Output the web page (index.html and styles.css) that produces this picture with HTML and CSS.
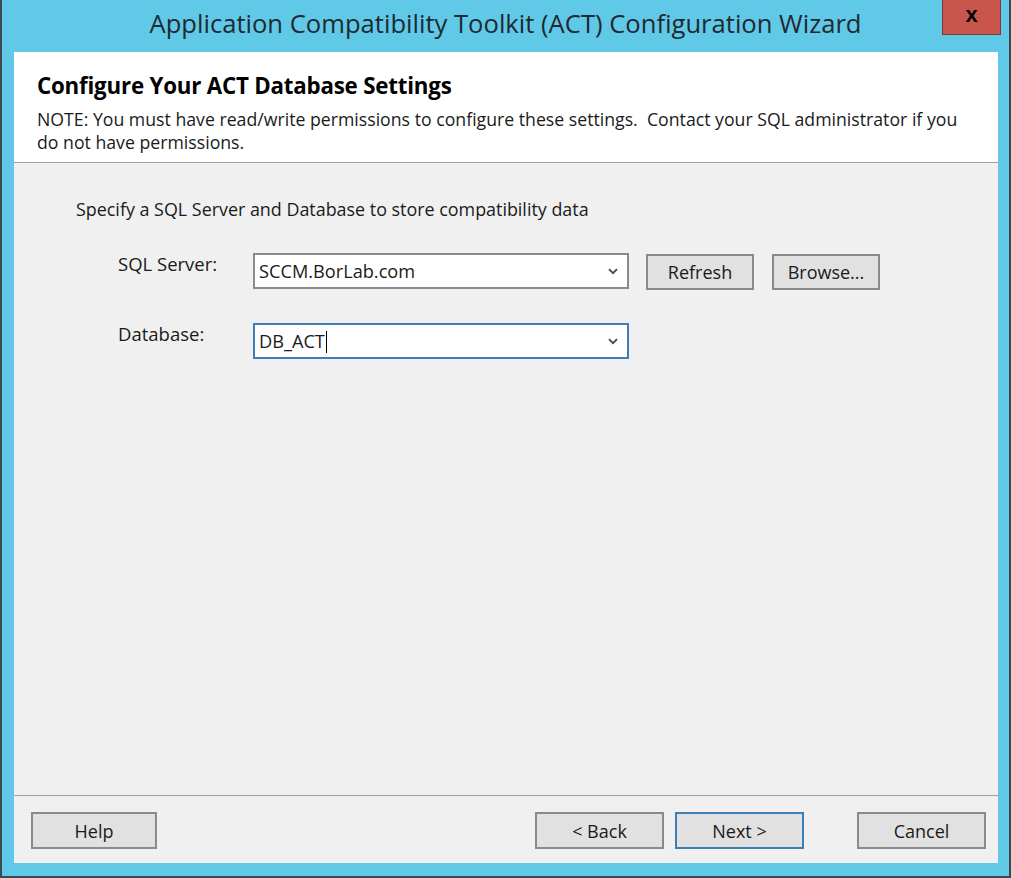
FILE: index.html
```html
<!DOCTYPE html>
<html lang="en">
<head>
  <meta charset="UTF-8" />
  <title>ACT Configuration Wizard</title>
  <link rel="stylesheet" href="styles.css">
</head>
<body>
  <div class="window">
    <div class="titlebar">
      <span></span>
      <h1 class="title">Application Compatibility Toolkit (ACT) Configuration Wizard</h1>
      <button class="close">x</button>
    </div>

    <div class="frame">
      <div class="header">
        <h2>Configure Your ACT Database Settings</h2>
        <p>NOTE: You must have read/write permissions to configure these settings.&nbsp; Contact your SQL administrator if you do not have permissions.</p>
      </div>

      <div class="content">
        <p class="intro">Specify a SQL Server and Database to store compatibility data</p>

        <div class="form">
          <div class="row">
            <label>SQL Server:</label>
            <div class="combo">
              <span>SCCM.BorLab.com</span>
              <svg class="chevron" width="10" height="7" viewBox="0 0 10 7"><path d="M1 1.2 L5 5.2 L9 1.2" fill="none" stroke="#4a4a4a" stroke-width="1.9"/></svg>
            </div>
            <button class="btn small">Refresh</button>
            <button class="btn small">Browse...</button>
          </div>

          <div class="row">
            <label>Database:</label>
            <div class="combo focused">
              <span>DB_ACT<i class="caret"></i></span>
              <svg class="chevron" width="10" height="7" viewBox="0 0 10 7"><path d="M1 1.2 L5 5.2 L9 1.2" fill="none" stroke="#4a4a4a" stroke-width="1.9"/></svg>
            </div>
          </div>
        </div>
      </div>

      <div class="footer">
        <button class="btn help">Help</button>
        <div class="nav">
          <button class="btn">&lt; Back</button>
          <button class="btn default">Next &gt;</button>
          <button class="btn cancel">Cancel</button>
        </div>
      </div>
    </div>
  </div>
</body>
</html>
```

FILE: styles.css
```css
* {
  box-sizing: border-box;
}

body {
  margin: 0;
  padding: 0;
  width: 1011px;
  height: 878px;
  font-family: 'Open Sans', 'Noto Sans', sans-serif;
  color: #1a1a1a;
  background: #ffffff;
}

.window {
  width: 1011px;
  height: 878px;
  background: #61c9e8;
  border: 2px solid #3c4a50;
  border-top: none;
  display: flex;
  flex-direction: column;
}

.titlebar {
  height: 52px;
  flex: none;
  display: grid;
  grid-template-columns: 1fr auto 1fr;
  align-items: start;
}

.title {
  margin: 0;
  padding-top: 7px;
  font-size: 25.6px;
  font-weight: 400;
  line-height: 34px;
  color: #1e2a30;
  white-space: nowrap;
}

.close {
  justify-self: end;
  margin-right: 8px;
  width: 59px;
  height: 35px;
  border: 1px solid #7d3a36;
  border-top: none;
  background: #c9564d;
  color: #000;
  font-family: 'Liberation Sans', sans-serif;
  font-size: 22px;
  font-weight: bold;
  line-height: 26px;
  padding: 0 0 4px;
}

.frame {
  flex: 1;
  margin: 0 11px 13px 12px;
  background: #f0f0f0;
  display: flex;
  flex-direction: column;
}

.header {
  background: #ffffff;
  height: 111px;
  padding: 21px 23px 0;
  border-bottom: 1px solid #a0a0a0;
}

.header h2 {
  margin: 0;
  font-size: 22.3px;
  font-weight: bold;
  line-height: 25px;
  color: #000;
  letter-spacing: -0.2px;
}

.header p {
  margin: 10px 0 0;
  font-size: 17.7px;
  line-height: 23px;
  padding-right: 10px;
}

.content {
  flex: 1;
  padding: 36px 0 0 62px;
  border-bottom: 1px solid #a0a0a0;
}

.intro {
  margin: 0;
  font-size: 17.9px;
  line-height: 20px;
}

.form {
  margin: 34px 0 0 42px;
  display: flex;
  flex-direction: column;
  gap: 33px;
}

.row {
  display: flex;
  align-items: flex-start;
}

.row label {
  width: 135px;
  padding-top: 1px;
  font-size: 18.5px;
  line-height: 20px;
}

.combo {
  width: 376px;
  height: 36px;
  background: #fff;
  border: 2px solid #8a8a8a;
  display: flex;
  align-items: center;
  justify-content: space-between;
  padding: 0 9px 0 4px;
  font-size: 18.2px;
}

.combo.focused {
  border-color: #3d7fb5;
}

.caret {
  display: inline-block;
  width: 1.5px;
  height: 22px;
  background: #000;
  vertical-align: -5px;
  margin-left: 1px;
}

.btn {
  height: 37px;
  width: 129px;
  background: #e1e1e1;
  border: 2px solid #8a8a8a;
  font-family: 'Open Sans', 'Noto Sans', sans-serif;
  font-size: 18px;
  color: #1a1a1a;
  padding: 0;
}

.btn.small {
  width: 108px;
  height: 36px;
  margin: 1px 0 0 17px;
}

.btn.small + .btn.small {
  margin-left: 18px;
}

.btn.default {
  border-color: #3d7fb5;
}

.footer {
  height: 67px;
  flex: none;
  display: flex;
  justify-content: space-between;
  padding: 16px 12px 0 17px;
}

.help {
  width: 126px;
}

.nav {
  display: flex;
  gap: 11px;
}

.cancel {
  margin-left: 42px;
}
```
